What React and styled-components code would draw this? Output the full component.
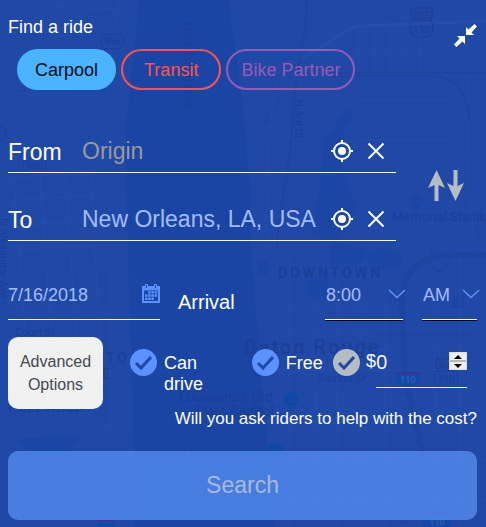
import React, { useState } from "react";
import styled, { createGlobalStyle } from "styled-components";

const GlobalStyle = createGlobalStyle`
  *, *::before, *::after { box-sizing: border-box; }
  body { margin: 0; background: #2048a6; }
  body, button, input, select { font-family: "Liberation Sans", Arial, sans-serif; }
  button, input, select { margin: 0; padding: 0; border: 0; border-radius: 0; background: none; }
  button { cursor: pointer; }
`;

const Page = styled.main`
  position: relative;
  isolation: isolate;
  min-height: 100vh;
  overflow: hidden;
  padding: 17px 9px 7px 8px;
  background: #2048a6;
  color: #fff;
  font-size: 18px;
`;

const MapLayer = styled.svg`
  position: absolute;
  inset: 0;
  z-index: -1;
  width: 100%;
  height: 100%;
  font-family: Roboto, sans-serif;
`;

const Header = styled.header`
  display: flex;
  justify-content: space-between;
  align-items: flex-start;
`;

const Title = styled.h1`
  margin: 0 0 12px;
  font-size: 18px;
  font-weight: 400;
  line-height: 20px;
`;

const Tabs = styled.div`
  display: flex;
  gap: 5px;
  padding-left: 9px;
`;

const Tab = styled.button`
  height: 41px;
  padding: 0 ${(p) => p.$pad}px;
  border: 2px solid ${(p) => p.$tone};
  border-radius: 21px;
  background: ${(p) => (p.$active ? p.$tone : "transparent")};
  color: ${(p) => (p.$active ? "#050b18" : p.$tone)};
  font-size: 18px;
  line-height: 20px;
  white-space: nowrap;
`;

const IconButton = styled.button`
  display: flex;
  flex: none;
  color: ${(p) => p.$tone || "#fff"};
`;

const CollapseButton = styled(IconButton)`
  margin-top: 7px;
`;

const Route = styled.section`
  display: flex;
  align-items: center;
  justify-content: space-between;
  margin-top: 40px;
  padding-right: 13px;
`;

const RouteFields = styled.div`
  display: grid;
  grid-template-columns: minmax(0, 1fr);
  flex: 1;
  min-width: 0;
  gap: 25px;
  margin-right: 32px;
`;

const RouteField = styled.div`
  display: flex;
  align-items: center;
  gap: 14px;
  height: 43px;
  padding-right: 11px;
  border-bottom: 1px solid #fff;
`;

const RouteLabel = styled.label`
  flex: none;
  width: 60px;
  padding-top: 2px;
  font-size: 23px;
  line-height: 26px;
`;

const RouteInput = styled.input`
  flex: 1;
  min-width: 0;
  height: 40px;
  color: #a4bcff;
  font-size: 23px;
  outline: none;
  &::placeholder { color: #999; opacity: 1; }
`;

const Schedule = styled.section`
  display: flex;
  align-items: flex-end;
  margin-top: 40px;
  height: 39px;
`;

const DateField = styled.div`
  display: flex;
  flex: 0 1 152px;
  min-width: 0;
  height: 39px;
  align-items: flex-start;
  border-bottom: 1px solid #fff;
`;

const DateInput = styled.input`
  flex: 1;
  min-width: 0;
  height: 28px;
  color: #a4bcff;
  font-size: 18px;
  outline: none;
`;

const CalendarButton = styled(IconButton)`
  padding-top: 3px;
`;

const ArrivalLabel = styled.span`
  flex: 1;
  padding: 0 18px 6px;
  font-size: 20px;
  line-height: 24px;
`;

const TimeFields = styled.div`
  display: flex;
  flex: none;
  gap: 19px;
`;

const SelectBox = styled.div`
  display: grid;
  grid-template-columns: minmax(0, 1fr);
  width: ${(p) => p.$width}px;
  height: 39px;
  border-bottom: 1px solid #fff;
  box-shadow: 0 1px 0 #050b18;
  & > * { grid-area: 1 / 1; }
  & > svg { justify-self: end; margin: 8px -3px 0 0; pointer-events: none; }
`;

const Select = styled.select`
  appearance: none;
  width: 100%;
  height: 28px;
  padding-left: 1px;
  color: #a4bcff;
  font-size: 18px;
  outline: none;
`;

const Options = styled.section`
  display: flex;
  align-items: flex-start;
  margin-top: 17px;
`;

const AdvancedButton = styled.button`
  flex: none;
  width: 95px;
  height: 72px;
  margin-right: 27px;
  border-radius: 10px;
  background: #f0f0f0;
  color: #444952;
  font-size: 16px;
  line-height: 23px;
`;

const Choices = styled.div`
  display: grid;
  flex: 1;
  grid-template-columns: 3fr 2fr auto;
  padding: 12px 10px 0 0;
`;

const Choice = styled.label`
  display: flex;
  gap: ${(p) => p.$gap || 7}px;
  line-height: 21px;
`;

const ChoiceText = styled.span`
  width: ${(p) => (p.$narrow ? "44px" : "auto")};
  padding-top: ${(p) => p.$top ?? 4}px;
`;

const CheckDisc = styled.span`
  display: grid;
  flex: none;
  width: 27px;
  height: 27px;
  & > * { grid-area: 1 / 1; }
  & > svg { place-self: center; pointer-events: none; }
`;

const Checkbox = styled.input`
  appearance: none;
  width: 27px;
  height: 27px;
  border-radius: 50%;
  background: ${(p) => p.$tone};
  cursor: pointer;
`;

const Cost = styled.div`
  display: flex;
`;

const AmountField = styled.div`
  display: flex;
  align-items: flex-start;
  width: 91px;
  height: 39px;
  border-bottom: 1px solid #fff;
`;

const AmountInput = styled.input`
  flex: 1;
  min-width: 0;
  height: 25px;
  color: #fff;
  font-family: "Open Sans", sans-serif;
  font-size: 20px;
  outline: none;
  appearance: textfield;
  &::-webkit-inner-spin-button { appearance: none; margin: 0; }
`;

const Stepper = styled.div`
  display: grid;
  width: 18px;
  height: 18px;
  margin-top: 3px;
  border: 1px solid #ddd;
  background: #b8b8b8;
  gap: 2px;
`;

const Step = styled.button`
  display: grid;
  place-items: center;
  background: #efefef;
`;

const Question = styled.p`
  margin: 0;
  font-size: 17px;
  line-height: 20px;
  text-align: right;
`;

const SearchButton = styled.button`
  width: 100%;
  height: 69px;
  margin-top: 22px;
  border-radius: 10px;
  background: rgba(84, 139, 239, 0.8);
  color: #a8b9df;
  font-size: 23px;
`;

const TargetIcon = () => (
  <svg width="22" height="22" viewBox="0 0 22 22" fill="none" stroke="currentColor" strokeWidth="2">
    <circle cx="11" cy="11" r="8" />
    <circle cx="11" cy="11" r="4" fill="currentColor" stroke="none" />
    <path d="M11 0v4M11 18v4M0 11h4M18 11h4" />
  </svg>
);

const CrossIcon = () => (
  <svg width="18" height="18" viewBox="0 0 18 18" stroke="currentColor" strokeWidth="2">
    <path d="M1.500 1.500l15 15M16.500 1.500l-15 15" />
  </svg>
);

const CollapseIcon = () => (
  <svg width="23" height="23" viewBox="0 0 23 23" fill="currentColor">
    <path d="M12 11V3l2.500 2.500L20.500 0 23 2.500 17.500 8.500 20 11zM11 12v8l-2.500-2.500L2.500 23 0 20.500 5.500 14.500 3 12z" />
  </svg>
);

const SwapIcon = () => (
  <svg width="36" height="31" viewBox="0 0 36 31" fill="#b4bdc2">
    <path d="M8.500 0L17 18l-6.500-3v16h-4V15L0 18zM27.500 31L19 13l6.500 3V0h4v16l6.500-3z" />
  </svg>
);

const CalendarIcon = () => (
  <svg width="18" height="19" viewBox="0 0 18 19" fill="#5b92ff">
    <path fillRule="evenodd" d="M0 2h18v17H0zM2 6.500V17h14V6.500z" />
    <path d="M3 0h3v4H3zM12 0h3v4h-3z" />
    <path d="M4 1h1v3H4zM13 1h1v3h-1z" fill="#2048a6" />
    <path d="M6.200 7.200h2.500v2.400H6.200zM9.400 7.200h2.500v2.400H9.400zM12.600 7.200h2.500v2.400h-2.500zM3 10.300h2.500v2.500H3zM6.200 10.300h2.500v2.500H6.200zM9.400 10.300h2.500v2.500H9.400zM12.600 10.300h2.500v2.500h-2.500zM3 13.500h2.500V16H3zM6.200 13.500h2.500V16H6.200zM9.400 13.500h2.500V16H9.400z" />
  </svg>
);

const ChevronIcon = () => (
  <svg width="18" height="10" viewBox="0 0 18 10" fill="none" stroke="#5c93ff" strokeWidth="1.500">
    <path d="M1 1l8 7.500L17 1" />
  </svg>
);

const CheckIcon = () => (
  <svg width="17" height="14" viewBox="0 0 17 14" fill="none" stroke="#2048a6" strokeWidth="3">
    <path d="M1 7l5 5L16 1" />
  </svg>
);

const Triangle = ({ down }) => (
  <svg width="8" height="4" viewBox="0 0 8 4">
    <path d={down ? "M0 0h8L4 4z" : "M0 4h8L4 0z"} fill="#000" />
  </svg>
);

function MapBackdrop() {
  return (
    <MapLayer viewBox="0 0 486 527" preserveAspectRatio="xMidYMid slice" aria-hidden="true">
      <path fill="#1a45a4" d="M139 0C136 55 124 110 126 170s2 100 4 150 5 100 5 207h139c-4-50-7-90-13-140-1-50-8-90-10-140 0-80-10-160-23-247z" />
      <g fill="#1b46a6">
        <path d="M339 120l10-12 5 5-10 15-3 40 15 40-18 35-26-8 8-45 4-50zM366 257l16-9 20 5-2 15-28 2z" />
        <path d="M332 241l36 8-6 14-32 2zM308 279h20v18h-20zM259 261h9v14h-9zM452 295h12v13h-12zM410 196l8-4 6 8-8 14z" />
        <path d="M18 439l62-3-12 16H30z" />
      </g>
      <g fill="none" stroke="#264da9">
        <path d="M0 0c30 0 45 12 124 8M0 93l107 3V74l12-74M8 178l92-8M10 201l83-6M13 226l78-6M15 250l80-5M14 180l12 160M40 175l12 170M65 172l12 170M90 169l10 170M0 290h104M0 312h106M0 425h112M0 510l145-9M110 270v160" />
        <path strokeWidth="3" d="M300 60c30-18 50-34 60-34l126-5" />
        <path d="M358 25v50M375 25v50M390 25v50M405 25v50M420 25v50M355 51h66M355 160h103M360 100h90M360 120h90M359 140h94M470 70c-8 65-1 120 5 180M285 60c-14 20-20 100-18 190" />
        <path d="M265 310h221M265 330h221M270 350h216M270 370h216M275 400h211M278 430h208M280 460h206M280 500h206M290 250v277M315 300v227M337 280v247M360 275v252M385 290v237M435 280v247M460 260v267" />
      </g>
      <g fill="none" stroke="#1b4299" opacity="0.450">
        <path strokeWidth="6" d="M486 255h-35c-35 0-50 20-49 55 1 60 6 80 14 115 8 30 10 60 10 102" />
        <path strokeWidth="2" d="M307 0c-2 50-14 80-15 125s-14 80-15 125M330 76h102c25 0 35 20 37 44M432 250c-8 30 22 25 18 0M486 73H330" />
        <path d="M82 122h232M82 189h232M8 267h120M376 335h91" />
      </g>
      <g fill="#1b3f98" fontSize="12">
        <text transform="translate(184 21) rotate(90)" fontSize="12">Mississippi River</text>
        <text transform="translate(295 99) rotate(90)" fontSize="11">N 3rd St</text>
        <text transform="translate(0 218) rotate(90)" fontSize="11">N Alexander Ave</text>
        <text x="392" y="221" fontSize="13">Memorial Stadium</text>
        <text x="15" y="336" fontSize="11">Court St</text>
        <text x="278" y="278" fontSize="14" fontWeight="500" letterSpacing="3">DOWNTOWN</text>
        <text x="106" y="363" fontSize="14" fontWeight="500" letterSpacing="3">TO</text>
        <text x="102" y="379" fontSize="14" fontWeight="500">E</text>
        <text x="244" y="354" fontSize="20" fontWeight="500" letterSpacing="2">Baton Rouge</text>
        <text x="8" y="412" fontSize="15" fontWeight="500" letterSpacing="1">Port Allen</text>
        <text x="319" y="382" fontSize="11">Florida St</text>
        <text x="179" y="402" fontSize="14">Louisiana's Old</text>
        <text x="194" y="416" fontSize="14">State Capitol</text>
        <text x="140" y="459" fontSize="13">USS Kidd Museum</text>
        <text x="310" y="474" fontSize="11">Government St</text>
        <text transform="translate(401 479) rotate(90)" fontSize="11">East Blvd</text>
      </g>
      <g fill="none" stroke="#1b3f98">
        <rect x="101" y="34" width="23" height="15" rx="7" />
        <rect x="23" y="158" width="23" height="15" rx="7" />
        <rect x="-14" y="126" width="20" height="15" rx="7" />
        <rect x="12" y="474" width="19" height="15" rx="7" />
        <path d="M411 8h21v10h-21zM436 359h20v9h-20zM412 20h19l2 5-1 10-10 3-10-3-2-9zM436 371h20l2 5-1 9-11 3-11-3-1-9z" />
      </g>
      <g fill="#1b3f98" fontSize="10">
        <text x="104" y="45">986</text>
        <text x="26" y="169">986</text>
        <text x="19" y="485">1</text>
        <text x="414" y="16" fontSize="8">BUS</text>
        <text x="413" y="33">190</text>
        <text x="439" y="367" fontSize="8">BUS</text>
        <text x="438" y="383">190</text>
      </g>
      <path fill="#1149a8" d="M291 392a8 8 0 0 1 8 8c0 6-8 12-8 12s-8-6-8-12a8 8 0 0 1 8-8zM275 442a8 8 0 0 1 8 8c0 6-8 12-8 12s-8-6-8-12a8 8 0 0 1 8-8zM395 375h26v4q-2 6-13 8-11-2-13-8zM424 516h26v11h-26zM97 523h18v4H97z" />
      <path fill="#3b2f98" d="M397 372h23v2h-23zM426 512h22v3h-22zM98 518h16v3H98z" />
      <g fill="none" stroke="#1b3f98">
        <path d="M287 400l4-4 4 4v4h-8zM271 450l4-4 4 4v4h-8z" />
      </g>
      <g fill="#3159ac" fontSize="9" fontWeight="700">
        <text x="400" y="383">110</text>
        <text x="429" y="525">110</text>
      </g>
    </MapLayer>
  );
}

function Place({ id, label, value, onChange, placeholder }) {
  return (
    <RouteField>
      <RouteLabel htmlFor={id}>{label}</RouteLabel>
      <RouteInput id={id} value={value} placeholder={placeholder} onChange={(e) => onChange(e.target.value)} />
      <IconButton type="button" aria-label="Use current location"><TargetIcon /></IconButton>
      <IconButton type="button" aria-label="Clear" onClick={() => onChange("")}><CrossIcon /></IconButton>
    </RouteField>
  );
}

function Check({ tone = "#5b92ff", label }) {
  const [checked, setChecked] = useState(true);
  return (
    <CheckDisc>
      <Checkbox type="checkbox" $tone={tone} aria-label={label} checked={checked} onChange={() => setChecked(!checked)} />
      {checked && <CheckIcon />}
    </CheckDisc>
  );
}

export default function App() {
  const [mode, setMode] = useState("Carpool");
  const [origin, setOrigin] = useState("");
  const [destination, setDestination] = useState("New Orleans, LA, USA");
  const [amount, setAmount] = useState(0);

  const modes = [
    { name: "Carpool", tone: "#4ab4ff", pad: 16 },
    { name: "Transit", tone: "#ff5349", pad: 21 },
    { name: "Bike Partner", tone: "#9b59b6", pad: 13 },
  ];

  const swap = () => {
    setOrigin(destination);
    setDestination(origin);
  };

  return (
    <>
      <GlobalStyle />
      <Page>
        <MapBackdrop />
        <Header>
          <div>
            <Title>Find a ride</Title>
            <Tabs>
              {modes.map((m) => (
                <Tab key={m.name} type="button" $tone={m.tone} $pad={m.pad} $active={mode === m.name} onClick={() => setMode(m.name)}>
                  {m.name}
                </Tab>
              ))}
            </Tabs>
          </div>
          <CollapseButton type="button" aria-label="Collapse"><CollapseIcon /></CollapseButton>
        </Header>

        <Route>
          <RouteFields>
            <Place id="from" label="From" value={origin} placeholder="Origin" onChange={setOrigin} />
            <Place id="to" label="To" value={destination} placeholder="Destination" onChange={setDestination} />
          </RouteFields>
          <IconButton type="button" aria-label="Swap" onClick={swap}><SwapIcon /></IconButton>
        </Route>

        <Schedule>
          <DateField>
            <DateInput aria-label="Date" defaultValue="7/16/2018" />
            <CalendarButton type="button" aria-label="Open calendar"><CalendarIcon /></CalendarButton>
          </DateField>
          <ArrivalLabel>Arrival</ArrivalLabel>
          <TimeFields>
            <SelectBox $width={78}>
              <Select aria-label="Arrival time" defaultValue="8:00">
                <option>8:00</option>
                <option>9:00</option>
              </Select>
              <ChevronIcon />
            </SelectBox>
            <SelectBox $width={55}>
              <Select aria-label="AM or PM" defaultValue="AM">
                <option>AM</option>
                <option>PM</option>
              </Select>
              <ChevronIcon />
            </SelectBox>
          </TimeFields>
        </Schedule>

        <Options>
          <AdvancedButton type="button">Advanced Options</AdvancedButton>
          <Choices>
            <Choice>
              <Check label="Can drive" />
              <ChoiceText $narrow>Can drive</ChoiceText>
            </Choice>
            <Choice>
              <Check label="Free" />
              <ChoiceText>Free</ChoiceText>
            </Choice>
            <Cost>
              <Choice as="div" $gap={6}>
                <Check tone="#b4bdc2" label="Ask for an amount" />
                <ChoiceText as="label" htmlFor="amount" $top={2}>$</ChoiceText>
              </Choice>
              <AmountField>
                <AmountInput id="amount" type="number" min="0" value={amount} onChange={(e) => setAmount(Number(e.target.value))} />
                <Stepper>
                  <Step type="button" aria-label="Increase" onClick={() => setAmount(amount + 1)}><Triangle /></Step>
                  <Step type="button" aria-label="Decrease" onClick={() => setAmount(Math.max(0, amount - 1))}><Triangle down /></Step>
                </Stepper>
              </AmountField>
            </Cost>
          </Choices>
        </Options>

        <Question>Will you ask riders to help with the cost?</Question>
        <SearchButton type="button">Search</SearchButton>
      </Page>
    </>
  );
}
